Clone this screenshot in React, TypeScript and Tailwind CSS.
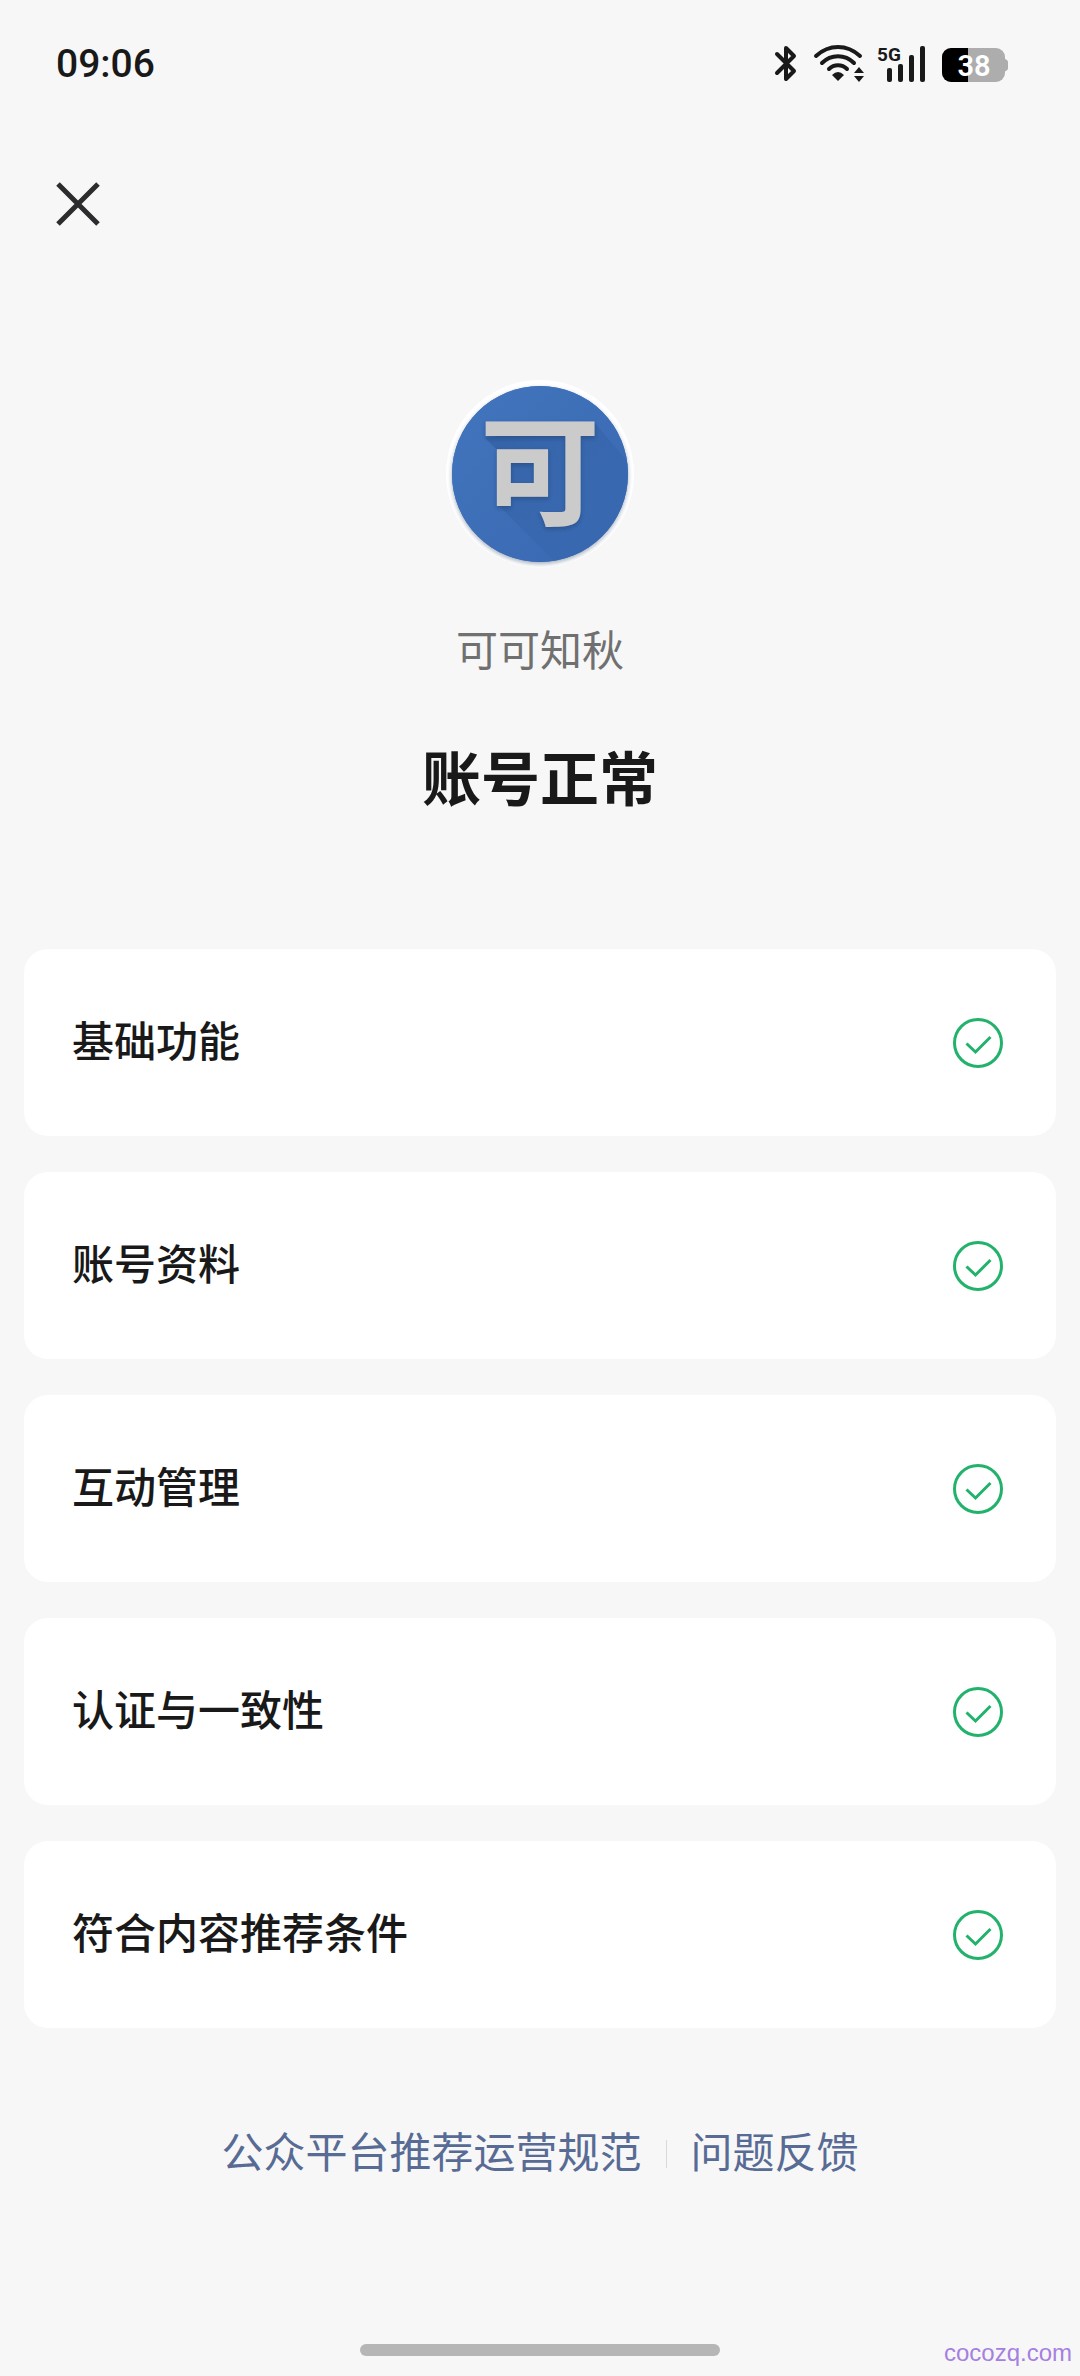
import React from 'react';

interface StatusItem {
  id: string;
  label: string;
}

const items: StatusItem[] = [
  { id: 'basic', label: '基础功能' },
  { id: 'profile', label: '账号资料' },
  { id: 'interaction', label: '互动管理' },
  { id: 'verify', label: '认证与一致性' },
  { id: 'recommend', label: '符合内容推荐条件' },
];

const BluetoothIcon = () => (
  <svg className="w-6 h-10" viewBox="0 0 24 40" fill="none" stroke="#191919" strokeWidth={4} strokeLinejoin="round" strokeLinecap="round">
    <path d="M4 10 L21 27 L13 35 V4 L21 12 L4 29" />
  </svg>
);

const WifiIcon = () => (
  <svg className="w-13 h-10" viewBox="0 0 52 40" fill="none" stroke="#191919" strokeWidth={4} strokeLinecap="round">
    <path d="M3 12 C16 0 34 0 47 12" />
    <path d="M9 19 C18 10 32 10 41 19" />
    <path d="M16 25 C21 20 29 20 34 25" />
    <path d="M19 31 Q25 25 31 31 L25 37 Z" fill="#191919" stroke="none" />
    <path d="M41 29 L46 23 L51 29 Z M41 32 L46 38 L51 32 Z" fill="#191919" stroke="none" />
  </svg>
);

const SignalIcon = () => (
  <svg className="w-12 h-10" viewBox="0 0 48 40" fill="#191919">
    <text x="0" y="17" fontSize="19" fontWeight="700" fontFamily="Roboto, sans-serif">5G</text>
    <rect x="10" y="24" width="5" height="14" rx="2" />
    <rect x="21" y="20" width="5" height="18" rx="2" />
    <rect x="32" y="11" width="5" height="27" rx="2" />
    <rect x="43" y="2" width="5" height="36" rx="2" />
  </svg>
);

const BatteryIcon = () => (
  <svg className="w-17 h-10" viewBox="0 0 68 40">
    <defs>
      <clipPath id="battery-body">
        <rect x="1" y="4" width="63" height="34" rx="9" />
      </clipPath>
    </defs>
    <path d="M63 14 C64 15 67 16 67 18 V24 C67 27 64 27 63 28 Z" fill="#adadad" />
    <g clipPath="url(#battery-body)">
      <rect width="68" height="40" fill="#adadad" />
      <rect width="27" height="40" fill="#000" />
    </g>
    <text x="33" y="32" textAnchor="middle" fontSize="29" fontWeight="600" fontFamily="Roboto, sans-serif" fill="#fff">38</text>
  </svg>
);

const Avatar = () => (
  <svg className="w-48 h-48" viewBox="0 0 192 192" role="img" aria-label="可可知秋">
    <defs>
      <linearGradient id="avatar-fill" x1="0" y1="0" x2="1" y2="1">
        <stop offset="0" stopColor="#4376be" />
        <stop offset="1" stopColor="#3767b0" />
      </linearGradient>
      <linearGradient id="avatar-shade" gradientUnits="userSpaceOnUse" x1="60" y1="60" x2="150" y2="150">
        <stop offset="0" stopColor="#1f4482" stopOpacity="0.3" />
        <stop offset="1" stopColor="#2c5596" stopOpacity="0.1" />
      </linearGradient>
      <clipPath id="avatar-clip">
        <circle cx="96" cy="96" r="88" />
      </clipPath>
      <filter id="avatar-drop" x="-20%" y="-20%" width="140%" height="140%">
        <feDropShadow dx="0" dy="2" stdDeviation="2" floodColor="#1b2f55" floodOpacity="0.4" />
      </filter>
    </defs>
    <circle cx="96" cy="96" r="94" fill="#fff" />
    <circle cx="96" cy="96" r="88" fill="#3c6db8" filter="url(#avatar-drop)" />
    <g clipPath="url(#avatar-clip)">
      <rect width="192" height="192" fill="url(#avatar-fill)" />
      <path d="M41 60 L53 72 V126 L125 198 L240 150 L151 45 Z" fill="url(#avatar-shade)" />
    </g>
    <text x="96" y="138" textAnchor="middle" fontSize="120" fontWeight="700" fontFamily="'Noto Sans CJK SC', sans-serif" fill="#cbcbcb" filter="url(#avatar-drop)">可</text>
  </svg>
);

const CheckIcon = () => (
  <svg className="w-13 h-13" viewBox="0 0 52 52" fill="none" stroke="#22b26b" strokeWidth={3} role="img" aria-label="正常">
    <circle cx="26" cy="26" r="23.5" />
    <path d="M14.5 26.5 L23.5 35 L38.5 20" />
  </svg>
);

const App: React.FC = () => {
  return (
    <div
      className="relative flex min-h-screen flex-col bg-[#f7f7f7] font-['Roboto','Noto_Sans_CJK_SC',sans-serif] text-[#191919]"
    >
      {/* Status bar */}
      <header className="flex h-32 items-center justify-between pl-14 pr-[71px]">
        <time className="text-[39px] font-medium leading-none">09:06</time>
        <div className="flex items-center">
          <BluetoothIcon />
          <div className="ml-4 flex items-center gap-3">
            <WifiIcon />
            <SignalIcon />
          </div>
          <div className="ml-4 flex">
            <BatteryIcon />
          </div>
        </div>
      </header>

      <nav className="flex h-38 items-center px-12">
        <button type="button" aria-label="关闭" className="p-2">
          <svg className="h-11 w-11" viewBox="0 0 44 44" fill="none" stroke="#2c2c2e" strokeWidth={5}>
            <path d="M2 2 L42 42 M42 2 L2 42" />
          </svg>
        </button>
      </nav>

      {/* Account */}
      <section className="mt-[98px] flex flex-col items-center">
        <Avatar />
        <p className="mt-[50px] text-[42px] leading-[64px] text-[#707070]">可可知秋</p>
        <h1 className="mt-[57px] text-[59px] font-bold leading-[80px]">账号正常</h1>
      </section>

      <ul className="mt-32 flex flex-col gap-9 px-6">
        {items.map((item) => (
          <li key={item.id} className="flex h-[187px] items-center justify-between rounded-3xl bg-white pl-12 pr-13">
            <span className="text-[42px] font-medium">{item.label}</span>
            <CheckIcon />
          </li>
        ))}
      </ul>

      {/* Links */}
      <footer className="mt-24 flex items-center justify-center text-[42px] leading-[60px] text-[#576b95]">
        <a href="#rules">公众平台推荐运营规范</a>
        <span className="mx-6 h-7 w-px bg-[#d9d9d9]" />
        <a href="#feedback">问题反馈</a>
      </footer>

      <div className="mx-auto mt-auto mb-5 h-3 w-1/3 rounded-full bg-[#b6b6b6]" />
      <span className="absolute right-2 bottom-2 font-['Liberation_Sans',sans-serif] text-[24px] leading-[30px] text-[#a680e0]">
        cocozq.com
      </span>
    </div>
  );
};

export default App;
